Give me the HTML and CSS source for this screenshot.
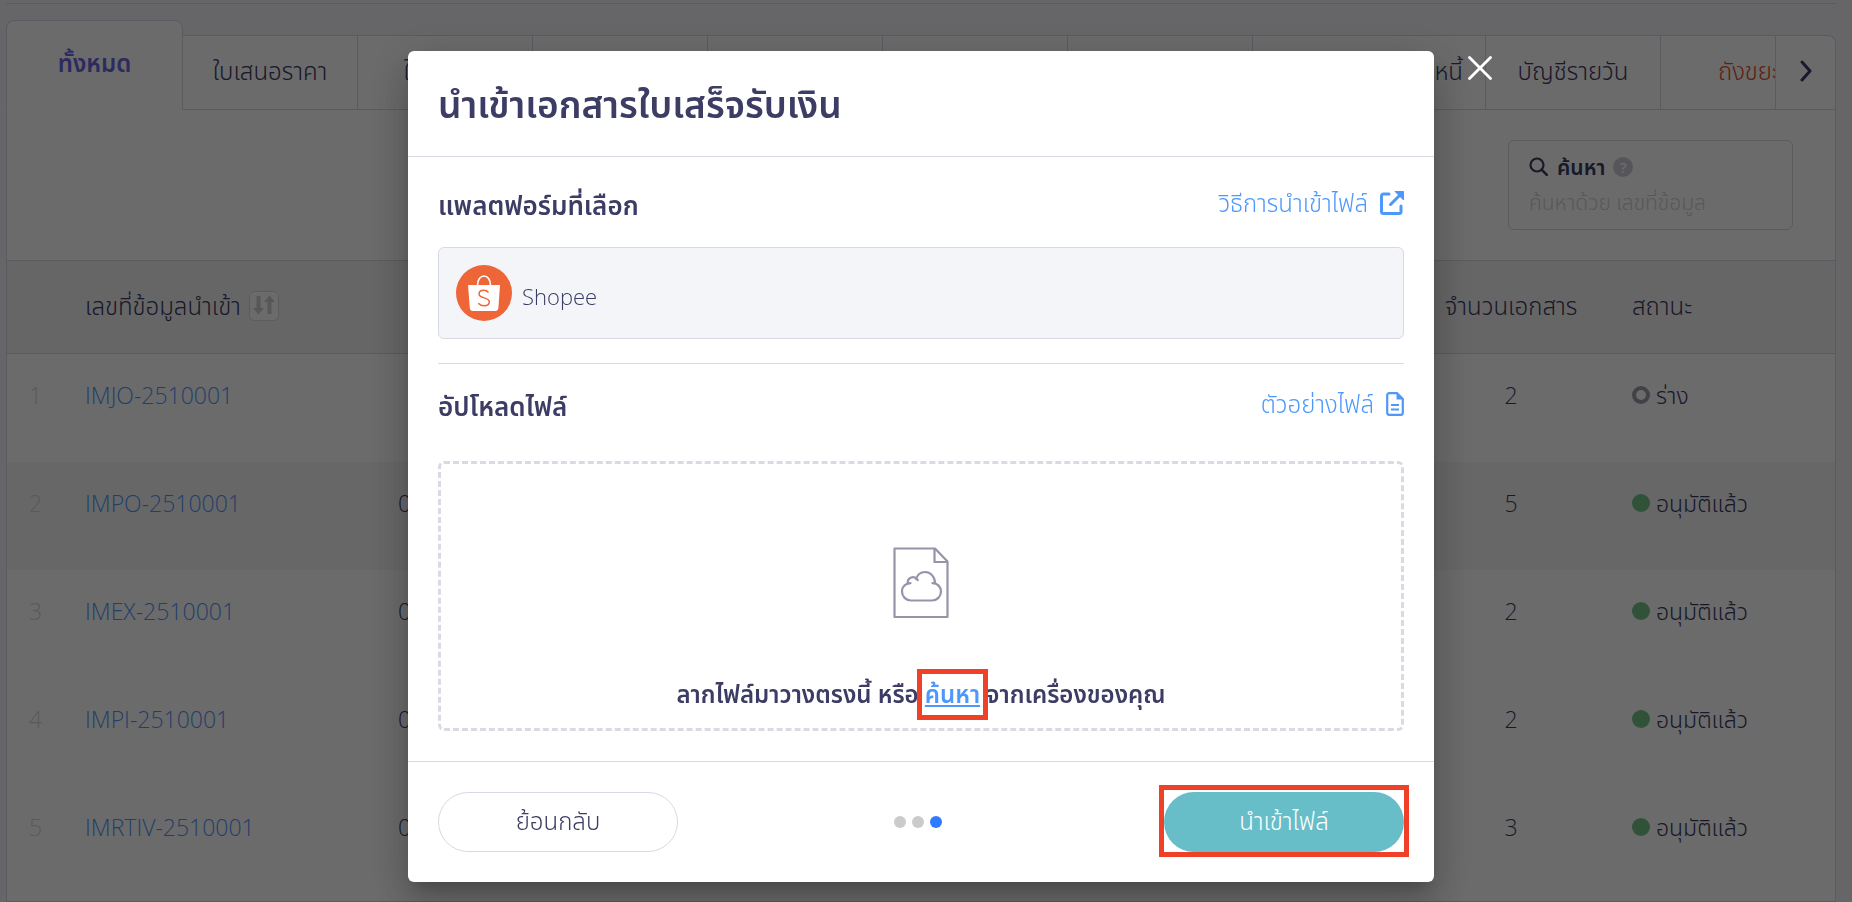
FILE: index.html
```
<!DOCTYPE html>
<html lang="th">
<head>
	<meta charset="utf-8">
	<meta name="viewport" content="width=device-width, initial-scale=1">
	<title>นำเข้าเอกสารใบเสร็จรับเงิน</title>
	<link rel="stylesheet" href="styles.css">
</head>
<body>

<div class="page">

	<!-- tabs -->
	<nav class="tabs">
		<button type="button" class="tab tab-active">ทั้งหมด</button>
		<button type="button" class="tab">ใบเสนอราคา</button>
		<button type="button" class="tab">ใบวางบิล</button>
		<button type="button" class="tab"></button>
		<button type="button" class="tab"></button>
		<button type="button" class="tab tab-mid"></button>
		<button type="button" class="tab tab-mid"></button>
		<button type="button" class="tab tab-wide">ใบเพิ่มหนี้</button>
		<button type="button" class="tab">บัญชีรายวัน</button>
		<button type="button" class="tab tab-trash">ถังขยะ</button>
		<button type="button" class="tab-next" aria-label="ถัดไป">
			<svg width="14" height="22" viewBox="0 0 14 22"><path d="M3 2l8 9-8 9" fill="none" stroke="currentColor" stroke-width="3" stroke-linecap="round" stroke-linejoin="round"/></svg>
		</button>
	</nav>

	<div class="card">
		<div class="toolbar">
			<div class="search">
				<label class="search-label" for="search">
					<svg width="20" height="20" viewBox="0 0 20 20"><circle cx="8" cy="8" r="6.500" fill="none" stroke="currentColor" stroke-width="2.200"/><path d="M12.800 12.800l5 5" stroke="currentColor" stroke-width="2.600" stroke-linecap="round"/></svg>
					<span>ค้นหา</span>
					<span class="help">?</span>
				</label>
				<input type="text" id="search" class="search-input" placeholder="ค้นหาด้วย เลขที่ข้อมูล">
			</div>
		</div>

		<table class="list">
			<thead>
				<tr>
					<th class="col-no"></th>
					<th class="col-id">
						<span class="sort">เลขที่ข้อมูลนำเข้า
							<svg width="30" height="30" viewBox="0 0 30 30"><rect x=".5" y=".5" width="29" height="29" rx="5" fill="#fff" stroke="#d9d9e3"/><path d="M7.500 5h4v12h3.500L9.500 23.500 4 17h3.500zM18.500 23V11H15l5.500-6.500L26 11h-3.500v12z" fill="#d0d0d4"/></svg>
						</span>
					</th>
					<th class="col-date"></th>
					<th class="col-count">จำนวนเอกสาร</th>
					<th class="col-status">สถานะ</th>
				</tr>
			</thead>
			<tbody>
				<tr>
					<td class="col-no">1</td>
					<td><a href="#">IMJO-2510001</a></td>
					<td></td>
					<td class="col-count">2</td>
					<td><span class="status"><i class="dot dot-draft"></i>ร่าง</span></td>
				</tr>
				<tr class="row-hover">
					<td class="col-no">2</td>
					<td><a href="#">IMPO-2510001</a></td>
					<td>0</td>
					<td class="col-count">5</td>
					<td><span class="status"><i class="dot"></i>อนุมัติแล้ว</span></td>
				</tr>
				<tr>
					<td class="col-no">3</td>
					<td><a href="#">IMEX-2510001</a></td>
					<td>0</td>
					<td class="col-count">2</td>
					<td><span class="status"><i class="dot"></i>อนุมัติแล้ว</span></td>
				</tr>
				<tr>
					<td class="col-no">4</td>
					<td><a href="#">IMPI-2510001</a></td>
					<td>0</td>
					<td class="col-count">2</td>
					<td><span class="status"><i class="dot"></i>อนุมัติแล้ว</span></td>
				</tr>
				<tr>
					<td class="col-no">5</td>
					<td><a href="#">IMRTIV-2510001</a></td>
					<td>0</td>
					<td class="col-count">3</td>
					<td><span class="status"><i class="dot"></i>อนุมัติแล้ว</span></td>
				</tr>
			</tbody>
		</table>
	</div>
</div>

<!-- import dialog -->
<div class="overlay">
	<div class="modal" role="dialog" aria-modal="true" aria-labelledby="modal-title">
		<button type="button" class="modal-close" aria-label="ปิด">
			<svg width="24" height="24" viewBox="0 0 24 24"><path d="M1.500 1.500l21 21M22.500 1.500l-21 21" stroke="#fff" stroke-width="2.800" stroke-linecap="round"/></svg>
		</button>

		<header class="modal-header">
			<h1 id="modal-title">นำเข้าเอกสารใบเสร็จรับเงิน</h1>
		</header>

		<div class="modal-body">
			<div class="section-head">
				<h2>แพลตฟอร์มที่เลือก</h2>
				<a href="#">วิธีการนำเข้าไฟล์
					<svg width="24" height="24" viewBox="0 0 24 24"><path d="M9 3H3.500A2 2 0 0 0 1.500 5v15.500a2 2 0 0 0 2 2H19a2 2 0 0 0 2-2V15M10.500 13.500L19.500 4.500" fill="none" stroke="currentColor" stroke-width="3" stroke-linecap="round"/><path d="M15 .5h8.500V9z" fill="currentColor" stroke="currentColor" stroke-linejoin="round"/></svg>
				</a>
			</div>

			<div class="platform">
				<svg width="56" height="56" viewBox="0 0 56 56">
					<circle cx="28" cy="28" r="28" fill="#ee6537"/>
					<path d="M21.500 20.500c0-6 3-9.500 6.500-9.500s6.500 3.500 6.500 9.500" fill="none" stroke="#fff" stroke-width="1.600"/>
					<path d="M12 20h32l-1.600 23c-.2 1.900-1.300 3-3 3H16.800c-1.700 0-2.800-1.100-3-3z" fill="#fff"/>
					<path d="M32.500 27.500c-1.200-1.500-2.800-2.200-4.700-2.200-2.800 0-4.700 1.500-4.700 3.600 0 5 10.200 3 10.200 7.900 0 2.300-2.100 4-5.100 4-2.400 0-4.500-.9-5.900-2.500" fill="none" stroke="#ee6537" stroke-width="1.500"/>
				</svg>
				<span class="platform-name">Shopee</span>
			</div>

			<hr>

			<div class="section-head">
				<h2>อัปโหลดไฟล์</h2>
				<a href="#">ตัวอย่างไฟล์
					<svg width="18" height="24" viewBox="0 0 18 24"><path d="M11 1.200H3.200a2 2 0 0 0-2 2v17.600a2 2 0 0 0 2 2h11.600a2 2 0 0 0 2-2V7z" fill="none" stroke="currentColor" stroke-width="2.200"/><path d="M10.500 1v6.500H17zM5 12h8v2H5zM5 16.500h8v2H5z" fill="currentColor"/></svg>
				</a>
			</div>

			<div class="dropzone">
				<svg width="56" height="72" viewBox="0 0 56 72" fill="none" stroke="#9594a9" stroke-width="2.200" stroke-linejoin="round">
					<path d="M1.500 1.500h40.500l12.500 13v55.500h-53zM41.500 1.500v13.500h13"/>
					<path d="M18 53.500c-5 0-9-4-9-9 0-5 3.500-8 8.500-8.400M14.800 36c-.5-5 6-8.500 10-3M23 32c1.500-4.500 5-7 9-7 5.500 0 10 4.500 10 11.500M39.500 36.200c5 0 8.500 3.700 8.500 8.300 0 5-4 9-9 9H18" stroke-linecap="round"/>
				</svg>
				<p>ลากไฟล์มาวางตรงนี้ หรือ <a href="#" class="browse marked">ค้นหา</a> จากเครื่องของคุณ</p>
			</div>
		</div>

		<footer class="modal-footer">
			<button type="button" class="btn">ย้อนกลับ</button>
			<div class="steps"><i></i><i></i><i class="on"></i></div>
			<button type="button" class="btn btn-primary marked">นำเข้าไฟล์</button>
		</footer>
	</div>
</div>

</body>
</html>
```
FILE: styles.css
```
* {
  box-sizing: border-box;
}

body {
  margin: 0;
  background: #f4f4f9;
  color: #3c3c64;
  font-family: "Open Sans", "Noto Sans Thai", "Noto Sans", sans-serif;
  font-size: 24px;
  font-weight: 350;
  line-height: 36px;
  height: 100vh;
  overflow: hidden;
}

button, input {
  font: inherit;
  color: inherit;
}

svg {
  display: block;
  flex: none;
}

a {
  color: #4f98fb;
  text-decoration: none;
}

.page {
  margin: 3px 16px 0 6px;
  border-top: 1px solid #d9d9e3;
  padding-top: 16px;
}

/** tabs **/
.tabs {
  display: flex;
  align-items: flex-end;
}

.tab, .tab-next {
  flex: 1 1 175px;
  min-width: 0;
  height: 75px;
  padding: 0 0 4px;
  background: #fff;
  border: 1px solid #d9d9e3;
  border-left: 0;
  overflow: hidden;
  white-space: nowrap;
}

.tab-active {
  flex-basis: 177px;
  height: 90px;
  border-left: 1px solid #d9d9e3;
  border-bottom-color: #fff;
  border-radius: 8px 8px 0 0;
  color: #6a68e0;
  font-weight: 600;
}

.tab-mid {
  flex-basis: 185px;
}

.tab-wide {
  flex-basis: 233px;
  padding-right: 22px;
  text-align: right;
}

.tab-trash {
  flex-basis: 115px;
  padding-left: 57px;
  text-align: left;
  color: #e0502c;
}

.tab-next {
  display: flex;
  justify-content: center;
  align-items: center;
  flex: 0 0 60px;
  border-radius: 0 8px 0 0;
}

/** list card **/
.card {
  background: #fff;
  border: 1px solid #d9d9e3;
  border-top: 0;
  padding-bottom: 7px;
}

.toolbar {
  display: flex;
  justify-content: flex-end;
  padding: 30px 42px 30px;
}

.search {
  width: 285px;
  height: 90px;
  padding: 8px 20px;
  border: 1px solid #d9d9e3;
  border-radius: 6px;
}

.search-label {
  display: flex;
  align-items: center;
  gap: 8px;
  font-size: 21px;
  font-weight: 600;
}

.help {
  width: 20px;
  height: 20px;
  border-radius: 50%;
  background: #cdcdd6;
  color: #fff;
  font-size: 15px;
  line-height: 20px;
  text-align: center;
}

.search-input {
  display: block;
  width: 100%;
  height: 34px;
  padding: 0;
  border: 0;
  outline: 0;
  background: none;
  font-size: 21px;
}

.search-input::placeholder {
  color: #d2d2d6;
  opacity: 1;
}

.list {
  width: 100%;
  border-collapse: collapse;
  table-layout: fixed;
}

.list th {
  height: 93px;
  padding: 0 0 2px;
  background: #f4f4f6;
  border-top: 1px solid #d9d9e3;
  border-bottom: 1px solid #d9d9e3;
  font-weight: 350;
  text-align: left;
}

.list td {
  height: 108px;
  padding: 23px 0 0;
  vertical-align: top;
}

.list td {
  font-size: 23px;
}

.list .col-no {
  width: 78px;
  padding-left: 22px;
  color: #d6d6d8;
}

.list .col-id {
  width: 313px;
}

.list .col-count {
  width: 242px;
  text-align: center;
}

.list .col-status {
  width: 203px;
}

.row-hover {
  background: #f6f6f6;
}

.sort, .status {
  display: flex;
  align-items: center;
  gap: 8px;
}

.status {
  gap: 6px;
}

.dot {
  width: 18px;
  height: 18px;
  border-radius: 50%;
  background: #70c485;
}

.dot-draft {
  background: none;
  border: 4px solid #9c9cab;
}

/** dialog **/
.overlay {
  position: fixed;
  inset: 0;
  z-index: 10;
  display: flex;
  justify-content: center;
  align-items: flex-start;
  padding: 51px 10px 0 0;
  background: rgba(0, 0, 0, 0.58);
}

.modal {
  position: relative;
  width: 1026px;
  max-width: 90%;
  background: #fff;
  border-radius: 6px;
  box-shadow: 0 11px 15px -7px rgba(0, 0, 0, 0.2), 0 24px 38px 3px rgba(0, 0, 0, 0.14), 0 9px 46px 8px rgba(0, 0, 0, 0.12);
}

.modal-close {
  position: absolute;
  top: 5px;
  right: -58px;
  width: 24px;
  height: 24px;
  padding: 0;
  border: 0;
  background: none;
}

.modal-header {
  padding: 26px 30px;
  border-bottom: 1px solid #d9d9e3;
}

.modal-header h1 {
  margin: 0;
  font-size: 37px;
  font-weight: 600;
  line-height: 53px;
}

.modal-body {
  padding: 30px;
}

.section-head {
  display: flex;
  justify-content: space-between;
  align-items: flex-start;
}

.section-head h2 {
  margin: 0;
  font-size: 26px;
  font-weight: 600;
}

.section-head a {
  display: flex;
  align-items: center;
  gap: 12px;
  line-height: 32px;
}

.platform {
  display: flex;
  align-items: center;
  gap: 10px;
  height: 92px;
  margin-top: 24px;
  padding: 0 17px;
  background: #f4f5f8;
  border: 1px solid #d9d9e3;
  border-radius: 6px;
}

.platform-name {
  padding-top: 5px;
  font-size: 22px;
}

hr {
  height: 1px;
  margin: 24px 0;
  border: 0;
  background: #d9d9e3;
}

.dropzone {
  display: flex;
  flex-direction: column;
  align-items: center;
  gap: 57px;
  height: 270px;
  margin-top: 37px;
  padding-top: 83px;
  border: 3px dashed #dadae5;
  border-radius: 6px;
}

.dropzone p {
  margin: 0;
  font-weight: 600;
}

.browse {
  text-decoration: underline;
}

/** red frame round the thing to click **/
.marked {
  position: relative;
}

.marked::after {
  content: "";
  position: absolute;
  inset: -8px -8px -10px;
  border: 5px solid #ee4127;
}

.modal-footer {
  display: flex;
  justify-content: space-between;
  align-items: center;
  padding: 30px;
  border-top: 1px solid #d9d9e3;
}

.btn {
  width: 240px;
  height: 60px;
  padding: 0 0 3px;
  border: 1px solid #d9d9e3;
  border-radius: 30px;
  background: #fff;
}

.btn-primary {
  border: 0;
  background: #67bec9;
  color: #fff;
}

.btn-primary::after {
  inset: -7px -5px -5px;
}

.steps {
  display: flex;
}

.steps i {
  width: 12px;
  height: 12px;
  margin-right: 6px;
  border-radius: 50%;
  background: #cbcbcb;
}

.steps .on {
  background: #2f7bff;
}
```
